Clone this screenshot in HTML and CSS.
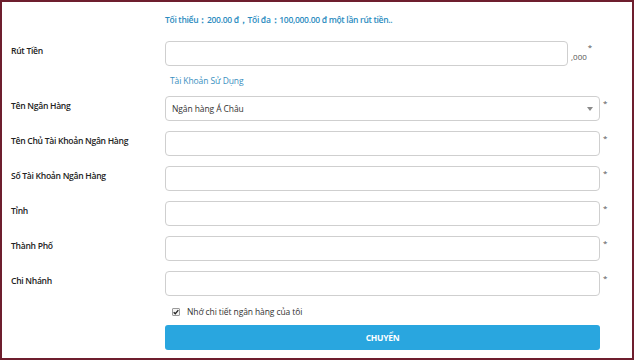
FILE: index.html
```
<!DOCTYPE html>
<html lang="vi">
<head>
<meta charset="utf-8">
<title>Rút Tiền</title>
<link rel="stylesheet" href="styles.css">
</head>
<body>
<div class="frame">
  <form class="form">
    <div class="row hint-row">
      <div class="label"></div>
      <div class="hint">Tối thiểu：200.00 đ，Tối đa：100,000.00 đ một lần rút tiền..</div>
    </div>

    <div class="row amount-row">
      <div class="label">Rút Tiền</div>
      <div class="field amount">
        <input class="input amount-input" type="text">
        <span class="suffix">,000</span>
        <span class="req req-inline">*</span>
      </div>
    </div>

    <div class="row link-row">
      <div class="label"></div>
      <div class="link">Tài Khoản Sử Dụng</div>
    </div>

    <div class="row select-row">
      <div class="label">Tên Ngân Hàng</div>
      <div class="field">
        <div class="input select">
          <span>Ngân hàng Á Châu</span>
          <svg class="caret" width="6" height="4" viewBox="0 0 6 4"><path d="M0 0H6L3 4Z" fill="#8a8a8a"/></svg>
        </div>
      </div>
      <span class="req">*</span>
    </div>

    <div class="row">
      <div class="label">Tên Chủ Tài Khoản Ngân Hàng</div>
      <div class="field"><input class="input" type="text"></div>
      <span class="req">*</span>
    </div>

    <div class="row">
      <div class="label">Số Tài Khoản Ngân Hàng</div>
      <div class="field"><input class="input" type="text"></div>
      <span class="req">*</span>
    </div>

    <div class="row">
      <div class="label">Tỉnh</div>
      <div class="field"><input class="input" type="text"></div>
      <span class="req">*</span>
    </div>

    <div class="row">
      <div class="label">Thành Phố</div>
      <div class="field"><input class="input" type="text"></div>
      <span class="req">*</span>
    </div>

    <div class="row">
      <div class="label">Chi Nhánh</div>
      <div class="field"><input class="input" type="text"></div>
      <span class="req">*</span>
    </div>

    <div class="row check-row">
      <div class="label"></div>
      <label class="check">
        <span class="box"><svg width="7" height="6" viewBox="0 0 7 6"><path d="M0.8 3.2L2.7 5L6.2 0.8" fill="none" stroke="#222" stroke-width="1.5"/></svg></span>
        <span>Nhớ chi tiết ngân hàng của tôi</span>
      </label>
    </div>

    <div class="row">
      <div class="label"></div>
      <button type="button" class="submit">CHUYỂN</button>
    </div>
  </form>
</div>
</body>
</html>
```

FILE: styles.css
```
html, body {
  margin: 0;
  padding: 0;
  background: #ffffff;
}

.frame {
  box-sizing: border-box;
  width: 634px;
  height: 360px;
  border: 2px solid #6e1e2e;
  background: #ffffff;
  padding: 11px 0 0 8px;
  font-family: "Open Sans", "Noto Sans", sans-serif;
  color: #222;
}

.form {
  display: flex;
  flex-direction: column;
  gap: 10px;
}

.row {
  display: grid;
  grid-template-columns: 155px 435px auto;
  align-items: start;
}

.label {
  font-size: 8.6px;
  font-weight: 600;
  letter-spacing: -0.3px;
  color: #222;
  padding: 4px 0 0 1px;
  line-height: 12px;
}

.hint-row .hint {
  font-size: 8.5px;
  font-weight: 600;
  letter-spacing: -0.3px;
  color: #2b8bc0;
  line-height: 14px;
}

.amount-row { margin-top: 4px; }

.link-row { margin-top: -1px; }
.link {
  font-size: 8.5px;
  color: #3a8fc0;
  padding-left: 5px;
  line-height: 12px;
  letter-spacing: -0.1px;
}

.select-row { margin-top: -1px; }

.field {
  display: flex;
  align-items: center;
}

.input {
  box-sizing: border-box;
  width: 435px;
  height: 25px;
  border: 1px solid #cfcfcf;
  border-radius: 4px;
  background: #fff;
  margin: 0;
  padding: 0 6px;
  font-family: inherit;
  font-size: 8.5px;
  color: #333;
  outline: none;
}

.amount-input { width: 403px; }

.suffix {
  font-size: 8px;
  color: #555;
  margin-left: 3px;
  padding-top: 5px;
}

.req {
  font-size: 8px;
  color: #555;
  line-height: 8px;
  padding-left: 3px;
  padding-top: 3px;
}

.req-inline {
  align-self: flex-start;
  padding-left: 1px;
  padding-top: 2px;
}

.select {
  display: flex;
  align-items: center;
  justify-content: space-between;
  padding: 0 6px 0 6px;
  letter-spacing: -0.1px;
}

.check-row { margin-top: -1px; }
.check {
  display: flex;
  align-items: center;
  gap: 7px;
  padding-left: 7px;
  font-size: 8.5px;
  color: #333;
  letter-spacing: -0.1px;
  line-height: 14px;
}
.box {
  box-sizing: border-box;
  width: 8px;
  height: 8px;
  border: 1px solid #9a9a9a;
  border-radius: 1px;
  background: #f4f4f4;
  display: flex;
  align-items: center;
  justify-content: center;
}
.box svg { display: block; }

.submit {
  box-sizing: border-box;
  width: 435px;
  height: 25px;
  margin-top: -4px;
  border: none;
  border-radius: 3px;
  background: #29a6df;
  color: #fff;
  font-family: inherit;
  font-size: 8.5px;
  font-weight: 700;
  letter-spacing: -0.3px;
  cursor: pointer;
}
```
